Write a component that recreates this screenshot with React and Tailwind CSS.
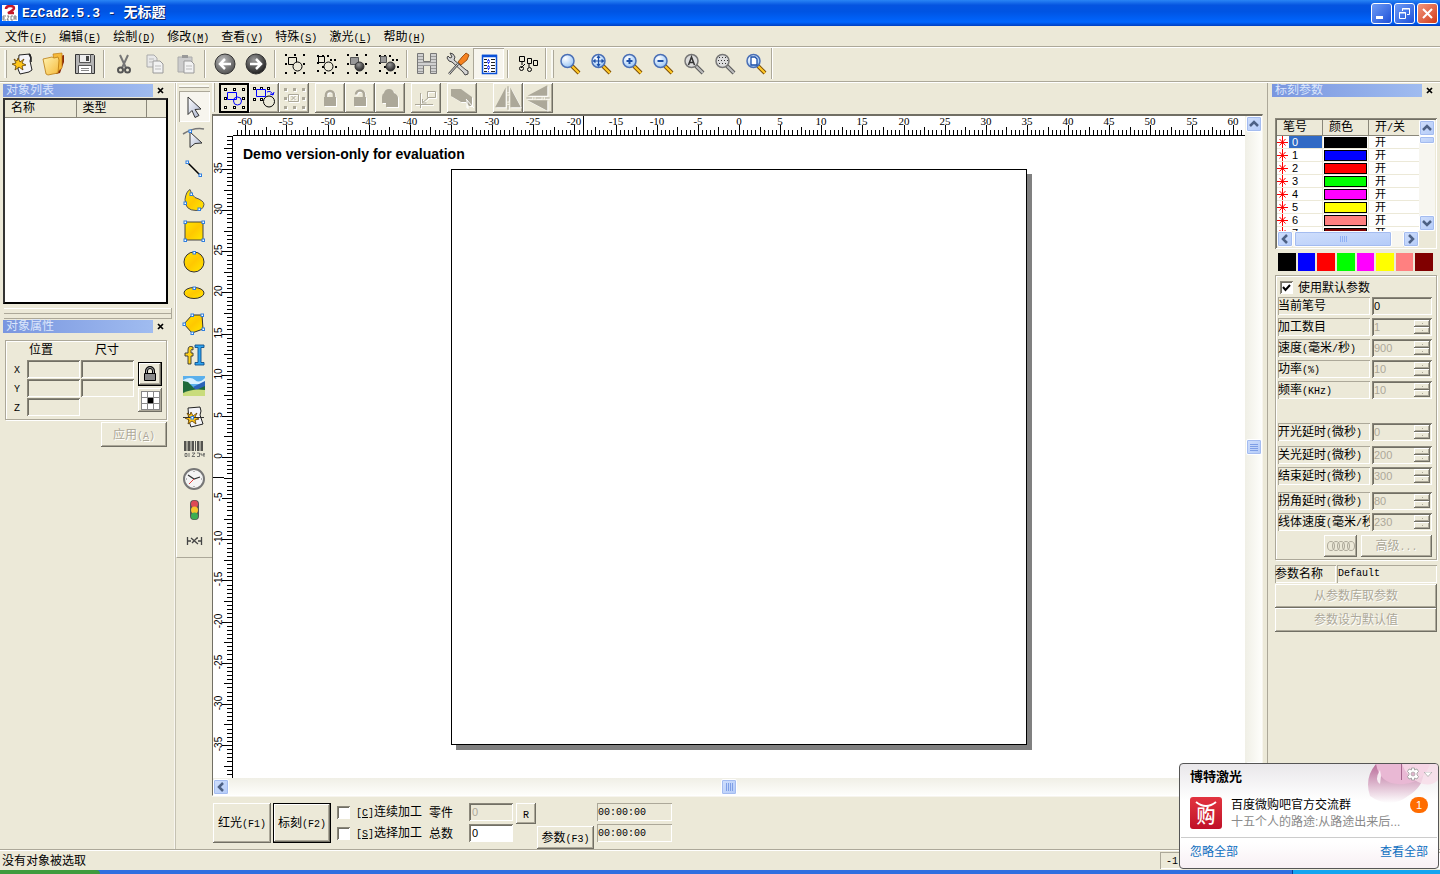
import React, { useState } from 'react'

const raised = 'bg-[#ece9d8] shadow-[inset_-1px_-1px_#716f64,inset_1px_1px_#fff,inset_-2px_-2px_#aca899]'
const sunken = 'shadow-[inset_1px_1px_#aca899,inset_-1px_-1px_#fff]'
const deep = 'shadow-[inset_1px_1px_#8a877a,inset_-1px_-1px_#fff,inset_2px_2px_#716f64]'

// Latin runs are set in a half-width face; "&" marks the mnemonic letter
const Txt = ({ children }) =>
  children.split(/([\x20-\x7e]+)/).map((part, i) => {
    if (i % 2 === 0) return part
    const at = part.indexOf('&')
    return (
      <span key={i} className="font-['Liberation_Mono',monospace] text-[10px] leading-none whitespace-pre">
        {at < 0 ? part : <>{part.slice(0, at)}<u>{part[at + 1]}</u>{part.slice(at + 2)}</>}
      </span>
    )
  })

const Svg = ({ children, size = 24, ...rest }) => (
  <svg width={size} height={size} viewBox="0 0 24 24" fill="none" className="shrink-0" aria-hidden="true" {...rest}>
    {children}
  </svg>
)

const Dots = ({ pts, color = '#000', s = 2 }) => pts.map(([x, y], i) => <rect key={i} x={x} y={y} width={s} height={s} fill={color} />)
const Nodes = ({ pts }) => pts.map(([x, y], i) => <rect key={i} x={x - 1} y={y - 1} width="2.5" height="2.5" fill="#fff" stroke="#2f7fe0" />)
const ring = [[2, 2], [11, 2], [20, 2], [2, 11], [20, 11], [2, 20], [11, 20], [20, 20]]

const Gradients = () => (
  <svg width="0" height="0" className="absolute" aria-hidden="true">
    <defs>
      <linearGradient id="gold" x1="0" y1="0" x2="1" y2="1"><stop offset="0" stopColor="#ffe600" /><stop offset=".5" stopColor="#ffc800" /><stop offset="1" stopColor="#ffe800" /></linearGradient>
      <linearGradient id="folder" x1="0" y1="0" x2="1" y2="1"><stop offset="0" stopColor="#fff3b0" /><stop offset="1" stopColor="#f5b93a" /></linearGradient>
      <radialGradient id="dark" cx=".4" cy=".3" r=".7"><stop offset="0" stopColor="#999" /><stop offset="1" stopColor="#222" /></radialGradient>
      <radialGradient id="grey" cx=".4" cy=".3" r=".7"><stop offset="0" stopColor="#bbb" /><stop offset="1" stopColor="#555" /></radialGradient>
      <radialGradient id="lens" cx=".35" cy=".3" r=".8"><stop offset="0" stopColor="#fff" /><stop offset="1" stopColor="#8fc0f5" /></radialGradient>
      <linearGradient id="arrow" x1="0" y1="0" x2="1" y2="1"><stop offset="0" stopColor="#fff" /><stop offset="1" stopColor="#a9b3cf" /></linearGradient>
    </defs>
  </svg>
)

const Star = ({ x = 0, y = 0 }) => (
  <path transform={`translate(${x} ${y})`} d="M7 7l2 4 4-3-2 4 4 2-4 1 1 4-4-3-4 3 1-4-4-2 4-1-2-4 3 2z" fill="#ffc61a" stroke="#5c3a00" strokeWidth=".8" />
)
const NewIcon = () => <Svg><path d="M8 3l11-1 1 3-1 4 2 9-3 2-9 2-2-5z" fill="#f4f4f8" stroke="#222" /><path d="M18 2l2 4 0 4" stroke="#222" strokeWidth="1.5" /><Star y={-1} /></Svg>
const OpenIcon = () => <Svg><path d="M15 5l7-2v7l-4 11-4 1z" fill="#8a2a08" /><path d="M11 2l9-1v15l-6 5z" fill="#f5b93a" stroke="#c07c10" strokeWidth=".7" /><path d="M1 7l9-2 2 1 4-1 1 3-1 13-10 2-2-1z" fill="url(#folder)" stroke="#b97b10" strokeWidth=".8" /></Svg>
const SaveIcon = () => <Svg><path d="M2.500 2.500h18l1 1v18h-19z" fill="#b4b4b4" stroke="#333" /><path d="M6.500 2.500h11v8h-11z" fill="#eee" stroke="#555" /><path d="M13 4h3v5h-3z" fill="#444" /><path d="M5.500 13.500h13v8h-13z" fill="#fff" stroke="#555" /><path d="M8 16.500h8M8 18.500h8" stroke="#888" /></Svg>
const CutIcon = () => <Svg><path d="M8 3l6 13M16 3l-6 13" stroke="#777" strokeWidth="2" /><circle cx="8.500" cy="18" r="2.500" stroke="#555" strokeWidth="2" /><circle cx="15.500" cy="18" r="2.500" stroke="#555" strokeWidth="2" /></Svg>
const CopyIcon = () => <Svg><path d="M4 3h7l3 3v9H4z" fill="#e8e8e8" stroke="#aaa" /><path d="M10 9h7l3 3v9H10z" fill="#f2f2f2" stroke="#999" /><path d="M6 7h5M6 10h4M12 14h6M12 17h6" stroke="#bbb" /></Svg>
const PasteIcon = () => <Svg><path d="M4 5h14v15H4z" fill="#ccc" stroke="#aaa" /><path d="M8 3h6v3H8z" fill="#999" /><path d="M10 9h7l3 3v9H10z" fill="#f2f2f2" stroke="#999" /><path d="M12 14h6M12 17h6" stroke="#bbb" /></Svg>
const NavIcon = ({ back }) => <Svg><circle cx="12" cy="12" r="10" fill={back ? 'url(#grey)' : 'url(#dark)'} stroke="#333" /><path d={back ? 'M18 12H7m5-5l-5 5 5 5' : 'M6 12h11m-5-5l5 5-5 5'} stroke="#fff" strokeWidth="2.500" /></Svg>
const GroupIcon = ({ solid, tight }) => (
  <Svg>
    <Dots pts={tight ? [[3, 3], [8, 3], [13, 3], [3, 10], [3, 18], [10, 20], [18, 20], [21, 14], [20, 7], [16, 7], [8, 14]] : ring} />
    <path d={tight ? 'M4.500 4.500h6v6h-6z' : 'M5.500 5.500h8v7h-8z'} fill={solid ? '#999' : 'none'} stroke={solid ? '#555' : '#000'} />
    <circle cx="14.500" cy="14.500" r="4.500" fill={solid ? 'url(#dark)' : '#ece9d8'} stroke={solid ? '#333' : '#000'} />
  </Svg>
)
const HatchIcon = () => <Svg><path d="M2.500 1.500h6v8h7v-8h6v20h-6v-8h-7v8h-6z" fill="#d0d0d0" stroke="#777" /><path d="M3 4.500h5M16 4.500h5M3 7.500h5M16 7.500h5M3 10.500h18M3 13.500h18M3 16.500h5M16 16.500h5M3 19.500h5M16 19.500h5" stroke="#999" /></Svg>
const ToolsIcon = () => <Svg><path d="M4 1l3 1 2 3-1 3 12 10 2 1v3l-3 1-2-3L6 10 3 9 1 6l1-2 2 2 2-1z" fill="#d4d4d4" stroke="#444" /><path d="M20 1l3 2-2 5-6 5-3-3 4-5z" fill="#f58220" stroke="#8a3c00" strokeWidth=".8" /><path d="M12 12L3 22" stroke="#444" strokeWidth="2.500" /><path d="M12 12L3 22" stroke="#ddd" /></Svg>
const ParamIcon = () => <Svg><path d="M5.500 3.500h14v18h-14z" fill="#fff" stroke="#0a50d8" strokeWidth="1.500" /><path d="M5 4h15" stroke="#0a50d8" strokeWidth="2.500" /><path d="M7 7.500h3M7 10.500h3M7 13.500h3M7 16.500h3M7 19.500h3M14 7.500h4M14 10.500h4M14 13.500h4M14 16.500h4M14 19.500h4" stroke="#222" /><path d="M11.500 7v13" stroke="#2a3cff" strokeDasharray="2 1" /><path d="M10.500 8.500h2v2h-2zM10.500 14.500h2v2h-2z" stroke="#2a3cff" strokeWidth=".8" /></Svg>
const ChainIcon = () => <Svg><path d="M3.500 4.500h5v5h-5zM11.500 6.500h4v5h-4zM17.500 8.500h4v5h-4zM6 10v3M13 12v3M9 12l-4 4" stroke="#000" /><circle cx="5.500" cy="16.500" r="2" stroke="#000" /><circle cx="13.500" cy="17.500" r="2" stroke="#000" /></Svg>
const ZoomIcon = ({ mark, grey }) => (
  <Svg>
    <path d="M14 14l7 7" stroke={grey ? '#555' : '#7a4a00'} strokeWidth="4" />
    <path d="M14 14l7 7" stroke={grey ? '#bbb' : '#ffc928'} strokeWidth="2.200" />
    <circle cx="9.500" cy="9" r="6.500" fill={grey ? '#ddd' : 'url(#lens)'} stroke={grey ? '#777' : '#4a6fb5'} strokeWidth="1.500" />
    {mark}
  </Svg>
)

const mainBars = [
  [['新建', <NewIcon />], ['打开', <OpenIcon />], ['保存', <SaveIcon />]],
  [['剪切', <CutIcon />], ['复制', <CopyIcon />], ['粘贴', <PasteIcon />]],
  [['撤消', <NavIcon back />], ['恢复', <NavIcon />]],
  [['组合', <GroupIcon />], ['分离组合', <GroupIcon tight />], ['群组', <GroupIcon solid />], ['分离群组', <GroupIcon solid tight />]],
  [['填充', <HatchIcon />], ['系统参数', <ToolsIcon />], ['对象列表', <ParamIcon />, true]],
  [['排序', <ChainIcon />]],
]

const blue = '#1c4fa8'
const zoomBar = [
  ['缩放', <ZoomIcon />],
  ['平移', <ZoomIcon mark={<path d="M9.500 4v10M4.500 9h10M8 6l1.500-2L11 6M8 12l1.500 2 1.500-2M6.500 7.500L4.500 9l2 1.500M12.500 7.500l2 1.500-2 1.500" stroke={blue} strokeWidth="1.200" />} />],
  ['放大', <ZoomIcon mark={<path d="M9.500 6v6M6.500 9h6" stroke={blue} strokeWidth="2" />} />],
  ['缩小', <ZoomIcon mark={<path d="M6.500 9h6" stroke={blue} strokeWidth="2" />} />],
  ['全部', <ZoomIcon grey mark={<path d="M6.500 13l3-8 3 8M7.500 10.500h4" stroke="#333" strokeWidth="1.500" />} />],
  ['选择', <ZoomIcon grey mark={<Dots s={1} color="#333" pts={[[6, 5], [9, 5], [12, 5], [5, 8], [8, 8], [11, 8], [14, 8], [6, 11], [9, 11], [12, 11]]} />} />],
  ['页面', <ZoomIcon mark={<path d="M7 5h4l2 2v6H7z" fill="#fff" stroke={blue} strokeWidth="1.300" />} />],
]

const dim = '#aca899'
const editBars = [
  [
    ['选取', <Svg><Dots pts={ring} s={3} /><Dots pts={[[3, 3], [12, 3], [21, 3], [3, 12], [21, 12], [3, 21], [12, 21], [21, 21]]} s={1} color="#fff" /><path d="M5.500 6.500h9v7h-9z" stroke="#00f" /><circle cx="15.500" cy="15" r="4" stroke="#00f" /></Svg>, 'on'],
    ['旋转', <Svg><Dots pts={[[1, 1], [8, 1], [15, 1], [1, 12], [8, 12]]} s={3} /><Dots pts={[[2, 2], [9, 2], [16, 2], [2, 13], [9, 13]]} s={1} color="#fff" /><path d="M4.500 3.500h9v7h-9z" stroke="#00f" /><circle cx="17" cy="15.500" r="5.500" stroke="#000" /><path d="M15 6q4-2 6 3m-3-1l3 1 1-3" stroke="#00f" /></Svg>, 'ready'],
    ['变换', <Svg><Dots pts={ring} s={3} color={dim} /><path d="M6.500 8.500h10v7h-10z" stroke={dim} /><path d="M9.500 10l4 4m0-4l-4 4" stroke={dim} /></Svg>],
  ],
  [
    ['锁定', <Svg><path d="M8 12V9a4 4 0 018 0v3" stroke={dim} strokeWidth="2.500" /><path d="M6 11h12v9H6z" fill={dim} /></Svg>],
    ['解锁', <Svg><path d="M8 8.500a4 4 0 018 0V12" stroke={dim} strokeWidth="2.500" /><path d="M6 11h12v9H6z" fill={dim} /></Svg>],
    ['全部解锁', <Svg><path d="M4 11q0-3 2-4 1-4 5-4 4 0 5 4 4 2 4 5v9H8v-4H4z" fill={dim} /></Svg>],
  ],
  [['原点', <Svg><path d="M1 18.500h18M6.500 7v15M8 17l6-5M8.500 13v4h4" stroke={dim} /><path d="M13.500 5.500h8v6h-8z" stroke={dim} /></Svg>]],
  [['焊接', <Svg><path d="M1 3h10l11 8v9h-3l-3-4H11L1 10z" fill={dim} /><path d="M16 13l7 8M17 14v8" stroke="#fff" /></Svg>]],
  [
    ['水平镜像', <Svg size={28}><path d="M10 3v17H1zM14 3v17h9z" fill={dim} /><path d="M12 2v20" stroke={dim} strokeDasharray="5 1 1 1" /></Svg>],
    ['垂直镜像', <Svg size={28}><path d="M20 10V1L3 10zM20 14v9L3 14z" fill={dim} /><path d="M2 12h20" stroke={dim} strokeDasharray="5 1 1 1" /></Svg>],
  ],
]
const editGaps = ['ml-0', 'ml-1.5', 'ml-1.5', 'ml-1.5', 'ml-4']

const drawTools = [
  ['选取', <Svg><path d="M6 2l13 12-6 .5 4 6-4 2-3-7-4 4z" fill="url(#arrow)" stroke="#333" /></Svg>, true],
  ['节点', <Svg><path d="M1 8Q12 1 22 3" stroke="#777" strokeWidth="1.500" /><path d="M8 6l12 11-7 .5-5 4z" fill="url(#arrow)" stroke="#333" /><Nodes pts={[[8, 5]]} /></Svg>],
  ['直线', <Svg><path d="M5 5l13 13" stroke="#000" strokeWidth="1.500" /><Nodes pts={[[5, 5], [18, 18]]} /></Svg>],
  ['曲线', <Svg><path d="M8 1.500q1 5 5 8 9 3 9 7-1 6-8 6-11 0-11-11 1-8 5-10z" fill="url(#gold)" stroke="#555" /><Nodes pts={[[9, 6], [3, 15], [17, 21]]} /></Svg>],
  ['矩形', <Svg><path d="M3 3h18v18H3z" fill="url(#gold)" stroke="#444" /><Nodes pts={[[3, 3], [21, 3], [3, 21], [21, 21]]} /></Svg>],
  ['圆', <Svg><circle cx="12" cy="12" r="10" fill="url(#gold)" stroke="#333" /><Nodes pts={[[12, 2.5]]} /></Svg>],
  ['椭圆', <Svg><ellipse cx="12" cy="12" rx="10" ry="5.500" fill="url(#gold)" stroke="#333" /><Nodes pts={[[12, 7]]} /></Svg>],
  ['多边形', <Svg><path d="M2 12l8-9h10l1 14-11 4z" fill="url(#gold)" stroke="#333" /><Nodes pts={[[2, 12], [10, 3], [20, 3], [21, 17], [10, 21]]} /></Svg>],
  ['文字', <Svg><path d="M11 4q-5-2-5 3v3H3v3h3v8h3v-8h2v-3H9V7q0-1 2 0z" fill="#ffd21a" stroke="#333" strokeWidth=".9" /><path d="M13 2h9v2.500h-3v15h3V22h-9v-2.500h3v-15h-3z" fill="#2fa4f0" stroke="#0d4f8a" strokeWidth=".9" /></Svg>],
  ['位图', <Svg><path d="M1 2h22v20H1z" fill="#5bb0ec" /><path d="M1 6q8-4 12 0t10-2v6H1z" fill="#d8f0ff" /><path d="M1 7l5 1 6 6 11-4v12H1z" fill="#1f6a3a" /><path d="M11 13l12-6v5l-9 4z" fill="#2a62b8" /><path d="M1 19q10-5 22-3v6H1z" fill="#c9dc7c" /></Svg>],
  ['矢量文件', <Svg><path d="M6 3l12-1 1 4-1 4 3 9-4 1-8 2-2-6z" fill="#f4f4f8" stroke="#222" /><Star x={2} y={0} /><path d="M1 12.500h21" stroke="#333" /><Nodes pts={[[10, 12.5]]} /></Svg>],
  ['条码', <Svg><path d="M3 5v10M7 5v10M11 5v10M16 5v10M20 5v10" stroke="#222" strokeWidth="1.500" /><path d="M5 5v10M9 5v10M13.500 5v10M18 5v10" stroke="#444" strokeWidth=".9" /><path d="M3 17.500h2v3H3zM7 17v4M10 17h3l-3 3.500h3M15 17h2.500v3.500H15M19 17v2h3v-2v4" stroke="#555" strokeWidth=".8" /></Svg>],
  ['延时器', <Svg><circle cx="12" cy="12" r="10" fill="#f4f4f4" stroke="#777" strokeWidth="2" /><path d="M6 8l6 4 6-2" stroke="#333" strokeWidth="1.300" /><path d="M12 12l-5 5" stroke="#e04040" /><path d="M12 4v1M12 19v1M4 12h1M19 12h1" stroke="#777" /></Svg>],
  ['输入口', <Svg><rect x="8" y="2" width="9" height="20" rx="4" fill="#555" /><circle cx="12.500" cy="6" r="3.500" fill="#dd4a55" /><circle cx="12.500" cy="12" r="3.500" fill="#f7c52c" /><circle cx="12.500" cy="18" r="3.500" fill="#3dae52" /></Svg>],
  ['输出口', <Svg><path d="M5.500 8v8M5 12h4M19.500 8v8M19 12h-3M9 9l7 6M10 14l5-5h1" stroke="#444" strokeWidth="1.300" /></Svg>],
]

const IconButton = ({ label, children, on }) => (
  <button aria-label={label} title={label} className={`flex h-[31px] w-[31px] shrink-0 items-center justify-center ${on ? 'bg-[#f7f5ee] ' + sunken : ''}`}>
    {children}
  </button>
)

const Grip = () => <div className="h-7 w-[3px] shrink-0 border-r border-[#aca899] bg-white/70" />
const Sep = () => <div className="mx-[3px] h-7 w-[2px] shrink-0 border-r border-white bg-[#aca899]" />

const TitleBar = () => (
  <header className="flex h-[26px] shrink-0 items-center gap-1 bg-[linear-gradient(#2a85f5,#0554e0_20%,#0054e3_45%,#0066ff_85%,#003fc0)] pr-0.5 pl-0.5">
    <svg width="16" height="16" viewBox="0 0 16 16" aria-hidden="true">
      <path fill="#fff" d="M0 0h16v16H0z" />
      <path d="M4 4q0-3 4-3 4 0 4 2 0 2-6 5h6" fill="none" stroke="#c4182a" strokeWidth="2.500" />
      <path d="M1 11h3M1 13h2M1 15h3M1 11v4M5 11h2l-2 4h2M11 11H9v4h2M12 15v-4h2v4M12 13h2" fill="none" stroke="#666" strokeWidth=".8" />
    </svg>
    <h1 className="flex-1 font-['Liberation_Mono','Noto_Sans_CJK_SC',monospace] text-[13px] font-bold text-white [text-shadow:1px_1px_#0a246a]">
      EzCad2.5.3 - <span className="text-[14px]">无标题</span>
    </h1>
    <div className="flex gap-0.5">
      <button aria-label="最小化" className="flex size-[21px] items-center justify-center rounded-[3px] border border-white bg-linear-to-br from-[#6f9bf5] to-[#1f4fd8]"><svg width="13" height="13"><path d="M1 9h7v3H1z" fill="#fff" /></svg></button>
      <button aria-label="还原" className="flex size-[21px] items-center justify-center rounded-[3px] border border-white bg-linear-to-br from-[#6f9bf5] to-[#1f4fd8]"><svg width="13" height="13" fill="none" stroke="#fff"><path d="M4.500 4V1.500h7v6H9M4 2h8M1.500 5.500h6v6h-6zM1 6h7" /></svg></button>
      <button aria-label="关闭" className="flex size-[21px] items-center justify-center rounded-[3px] border border-white bg-linear-to-br from-[#f0957c] to-[#d0360c]"><svg width="13" height="13" stroke="#fff" strokeWidth="2"><path d="M2 2l9 9M11 2l-9 9" /></svg></button>
    </div>
  </header>
)

const MenuBar = () => (
  <nav className="flex h-[21px] shrink-0 items-center gap-3 border-b border-[#aca899] pt-0.5 pl-[5px]">
    {['文件(&F)', '编辑(&E)', '绘制(&D)', '修改(&M)', '查看(&V)', '特殊(&S)', '激光(&L)', '帮助(&H)'].map((m) => (
      <button key={m} className="whitespace-nowrap"><Txt>{m}</Txt></button>
    ))}
  </nav>
)

const MainToolbar = () => (
  <div className="flex h-[35px] shrink-0 items-center border-t border-b border-t-white border-b-[#aca899] pb-0.5 pl-1">
    <Grip />
    {mainBars.map((bar, i) => (
      <React.Fragment key={i}>
        {i > 0 && <Sep />}
        {bar.map(([label, icon, on]) => <IconButton key={label} label={label} on={on}>{icon}</IconButton>)}
      </React.Fragment>
    ))}
    <div className="ml-0.5 h-full w-[2px] border-r border-white bg-[#aca899]" />
    <div className="ml-1 flex"><Grip /></div>
    {zoomBar.map(([label, icon]) => <IconButton key={label} label={label}>{icon}</IconButton>)}
    <div className="h-full w-[2px] border-r border-white bg-[#aca899]" />
  </div>
)

const DockTitle = ({ children }) => (
  <div className="flex h-[13px] items-center">
    <h2 className="flex h-[13px] w-[150px] items-center bg-linear-to-r from-[#7a96df] to-[#a0bcf0] pl-[3px] leading-[13px] text-[#dbe6fb]">{children}</h2>
    <button aria-label={`关闭${children}`} className="ml-0.5 flex size-[11px] items-center justify-center">
      <svg width="7" height="7" stroke="#000" strokeWidth="1.700"><path d="M1 1l5 5M6 1L1 6" /></svg>
    </button>
  </div>
)

const Field = ({ label }) => <input aria-label={label} disabled className={`h-[18px] w-[53px] px-1 ${deep}`} />

const LeftDock = () => (
  <aside className="flex w-[175px] shrink-0 flex-col border-r border-[#f7f5ee] pt-px">
    <div className="pl-[3px]"><DockTitle>对象列表</DockTitle></div>
    <div className="mt-px ml-[3px] h-[206px] w-[165px] border-2 border-t-[#333] border-r-black border-b-black border-l-[#333] bg-white">
      <table className="w-full table-fixed border-collapse">
        <thead>
          <tr className="h-[17px] bg-[#ece9d8] text-left">
            <th className="w-[71px] border-r border-b border-[#8a877a] py-0 pl-1.5 leading-4 font-normal">名称</th>
            <th className="w-[70px] border-r border-b border-[#8a877a] py-0 pl-1.5 leading-4 font-normal">类型</th>
            <th className="border-b border-[#8a877a]" />
          </tr>
        </thead>
        <tbody />
      </table>
    </div>
    <div className="mt-1 mr-0.5 ml-1 h-[11px] border-r border-b border-[#aca899]"><div className="h-[6px] border-t border-b border-t-white border-b-[#aca899]" /></div>
    <div className="mt-[1px] pl-[3px]"><DockTitle>对象属性</DockTitle></div>
    <section className="mt-[7px] ml-[5px] flex h-[80px] w-[162px] border border-[#aca899] shadow-[inset_1px_1px_#fff,1px_1px_#fff]">
      <div className="grid h-[76px] grid-cols-[13px_53px_53px] grid-rows-[18px_18px_18px_18px] gap-x-px gap-y-px pl-[7px]">
        <span />
        <span className="pl-0.5 leading-[19px]">位置</span>
        <span className="pl-3.5 leading-[19px]">尺寸</span>
        {['X', 'Y', 'Z'].map((a) => (
          <React.Fragment key={a}>
            <span className="pl-px leading-[18px]"><Txt>{a}</Txt></span>
            <Field label={`位置${a}`} />
            {a === 'Z' ? <span /> : <Field label={`尺寸${a}`} />}
          </React.Fragment>
        ))}
      </div>
      <div className="mt-[21px] ml-1 flex flex-col gap-0.5">
        <button aria-label="锁定比例" className={`flex size-6 items-center justify-center border border-black ${raised}`}>
          <svg width="16" height="18" fill="none"><path d="M4.500 9V6a3.500 3.500 0 017 0v3" stroke="#000" strokeWidth="3" /><path d="M4.500 9V6a3.500 3.500 0 017 0v3" stroke="#aaa" /><path d="M2.500 8.500h11v7h-11z" fill="#888" stroke="#000" /></svg>
        </button>
        <button aria-label="基准点" className={`flex size-6 items-center justify-center ${raised}`}>
          <svg width="19" height="19"><path d="M0 0h19v19H0z" fill="#888" />{[1, 7, 13].map((y) => [1, 7, 13].map((x) => <rect key={x + '-' + y} x={x} y={y} width="5" height="5" fill={x === 7 && y === 7 ? '#000' : '#fff'} />))}</svg>
        </button>
      </div>
    </section>
    <button disabled className={`mt-0.5 mr-[7px] h-[25px] w-[66px] self-end text-[#aca899] [text-shadow:1px_1px_#fff] ${raised}`}><Txt>应用(&A)</Txt></button>
  </aside>
)

const DrawTools = () => (
  <div className="w-[37px] shrink-0 border-l border-[#c5c2b2]">
    <div className="flex flex-col items-center border-b border-l border-[#aca899] border-l-white pr-px pb-px">
      <div className="mt-0.5 mb-[3px] h-[3px] w-[30px] border-b border-[#aca899] bg-white/70" />
      {drawTools.map(([label, icon, on]) => <IconButton key={label} label={label} on={on}>{icon}</IconButton>)}
    </div>
  </div>
)

const editState = {
  on: 'border-2 border-black bg-[#ece9d8]',
  ready: raised,
  off: `${raised} [&>svg]:drop-shadow-[1px_1px_0_#fff]`,
}

const EditToolbar = () => (
  <div className="flex h-[31px] items-start">
    <div className="mr-1 h-[29px] w-[3px] border-r border-[#aca899] bg-white/70" />
    {editBars.map((bar, i) => (
      <div key={i} className={`flex ${editGaps[i]}`}>
        {bar.map(([label, icon, state = 'off']) => (
          <button key={label} aria-label={label} title={label} disabled={state === 'off'} className={`flex size-[30px] items-center justify-center ${editState[state]}`}>{icon}</button>
        ))}
      </div>
    ))}
  </div>
)

// 576 px of paper stand for 70 mm
const unit = 576 / 70

const ticks = (from, to) => {
  const list = []
  for (let n = from * 2; n <= to * 2; n++) {
    list.push({ v: n / 2, pos: Math.round((n / 2) * unit), len: n % 10 === 0 ? 10 : n % 5 === 0 ? 8 : 5, major: n % 10 === 0 })
  }
  return list
}

const TopRuler = () => (
  <svg className="h-5 w-full min-w-0 border-b border-black" shapeRendering="crispEdges">
    <svg x="50%" overflow="visible">
      {ticks(-61, 61).map((t) => (
        <g key={t.v}>
          <rect x={t.pos} y={19 - t.len} width="1" height={t.len} />
          {t.major && <text x={t.pos} y="9" textAnchor="middle" className="font-['Liberation_Serif',serif] text-[11px]">{t.v}</text>}
        </g>
      ))}
      <rect x="-156" width="1" height="19" />
    </svg>
  </svg>
)

const LeftRuler = () => (
  <svg className="h-full w-5 border-r border-black" shapeRendering="crispEdges">
    <svg y="50%" overflow="visible">
      {ticks(-39, 39).map((t) => (
        <g key={t.v}>
          <rect x={19 - t.len} y={t.pos} width={t.len} height="1" />
          {t.major && <text transform={`translate(9 ${t.pos - 1}) rotate(-90)`} textAnchor="middle" className="font-['Liberation_Sans',sans-serif] text-[10px]">{-t.v || 0}</text>}
        </g>
      ))}
      <rect y="20" width="11" height="1" />
    </svg>
  </svg>
)

const chevrons = { up: 'M4 10l4-4 4 4', down: 'M4 6l4 4 4-4', left: 'M10 4L6 8l4 4', right: 'M6 4l4 4-4 4' }
const thumb = 'rounded-[2px] border border-white bg-linear-to-br from-[#d0dffc] to-[#b4cbf8] shadow-[0_0_0_1px_#a4bcf0_inset]'

const ScrollButton = ({ dir }) => (
  <button aria-label={dir} className={`flex size-4 shrink-0 items-center justify-center ${thumb}`}>
    <svg width="16" height="16" viewBox="0 0 16 16" fill="none" stroke="#4d6185" strokeWidth="2.500" className="shrink-0"><path d={chevrons[dir]} /></svg>
  </button>
)

const Drawing = () => (
  <div className="grid min-h-0 flex-1 grid-cols-[20px_minmax(0,1fr)_17px] grid-rows-[20px_minmax(0,1fr)_17px] border-t-2 border-r border-b border-l border-t-[#716f64] border-r-[#f7f5ee] border-b-white border-l-[#716f64] bg-white">
    <div />
    <TopRuler />
    <div className="row-span-2 flex flex-col items-center justify-between bg-linear-to-r from-[#f0efe6] to-[#fefefb]">
      <ScrollButton dir="up" />
      <div className={`flex size-4 flex-col items-center justify-center gap-px ${thumb}`}>
        {[0, 1, 2, 3].map((i) => <i key={i} className="h-px w-2 bg-[#7f9fe6]" />)}
      </div>
      <ScrollButton dir="down" />
    </div>
    <LeftRuler />
    <main className="relative flex items-center justify-center overflow-hidden">
      <p className="absolute top-2.5 left-2.5 font-['Liberation_Sans',sans-serif] text-[14px] leading-4 font-bold">Demo version-only for evaluation</p>
      <div className="size-[576px] border border-black bg-white shadow-[5px_5px_#808080]" />
    </main>
    <div className="col-span-2 flex items-center justify-between bg-linear-to-b from-[#f0efe6] to-[#fefefb]">
      <ScrollButton dir="left" />
      <div className={`flex size-4 items-center justify-center gap-px ${thumb}`}>
        {[0, 1, 2, 3].map((i) => <i key={i} className="h-2 w-px bg-[#7f9fe6]" />)}
      </div>
      <ScrollButton dir="right" />
    </div>
    <div className="bg-[#ece9d8]" />
  </div>
)

const MarkPanel = () => (
  <div className="flex h-[53px] shrink-0 items-start border-t border-[#f7f5ee] pt-1.5 pl-px whitespace-nowrap">
    <button className={`h-10 w-[58px] ${raised}`}><Txt>红光(F1)</Txt></button>
    <button className={`ml-0.5 h-10 w-[58px] border border-black ${raised}`}><Txt>标刻(F2)</Txt></button>
    <div className="ml-1.5 flex w-[92px] flex-col gap-[3px]">
      {['[&C]连续加工', '[&S]选择加工'].map((t) => (
        <label key={t} className="flex h-[18px] items-center gap-1.5">
          <input type="checkbox" className={`size-[13px] appearance-none bg-white ${deep}`} />
          <span><Txt>{t}</Txt></span>
        </label>
      ))}
    </div>
    <div className="flex flex-col gap-[3px]">
      <label className="flex h-[18px] items-center"><span className="w-10 pt-0.5">零件</span><input disabled defaultValue="0" className={`h-[18px] w-[44px] px-[3px] text-[11px] text-[#aca899] ${deep}`} /></label>
      <label className="flex h-[18px] items-center"><span className="w-10 pt-0.5">总数</span><input defaultValue="0" className={`h-[18px] w-[44px] bg-white px-[3px] text-[11px] ${deep}`} /></label>
    </div>
    <button className={`ml-[3px] h-[21px] w-5 ${raised}`}><Txt>R</Txt></button>
    <button className={`mt-[23px] ml-px h-[23px] w-[57px] ${raised}`}><Txt>参数(F3)</Txt></button>
    <div className="ml-[3px] flex flex-col gap-[3px]">
      <output className={`h-[18px] w-[75px] pl-px leading-[17px] ${sunken}`}><Txt>00:00:00</Txt></output>
      <output className={`h-[18px] w-[75px] pl-px leading-[17px] ${sunken}`}><Txt>00:00:00</Txt></output>
    </div>
  </div>
)

const pens = ['bg-black', 'bg-[#0000ff]', 'bg-[#ff0000]', 'bg-[#00ff00]', 'bg-[#ff00ff]', 'bg-[#ffff00]', 'bg-[#ff8080]', 'bg-[#800000]']

const PenList = () => (
  <div className={`mt-[21px] flex h-[131px] flex-col p-0.5 ${deep}`}>
    <div className="flex min-h-0 flex-1">
      <div className="min-w-0 flex-1 overflow-hidden bg-white">
        <table className="w-full table-fixed border-separate border-spacing-0">
          <thead>
            <tr className="h-4 bg-[#ece9d8] text-left align-top leading-[14px]">
              <th className="w-[46px] border-r border-b border-[#8a877a] p-0 pl-1.5 font-normal">笔号</th>
              <th className="w-[46px] border-r border-b border-[#8a877a] p-0 pl-1.5 font-normal">颜色</th>
              <th className="border-b border-[#8a877a] p-0 pl-1.5 font-normal"><Txt>开/关</Txt></th>
            </tr>
          </thead>
          <tbody>
            {pens.map((c, i) => (
              <tr key={c} className="h-[13px]">
                <td className="border-r border-b border-[#ece9d8] p-0">
                  <div className="flex h-3 items-center">
                    <svg width="12" height="12" stroke="#f00" className="shrink-0"><path d="M5.500 0v12M0 6.500h11M2.500 3l6 6.500M8.500 3l-6 6.500" /></svg>
                    <span className={`h-3 flex-1 pl-[3px] text-[11px] leading-3 ${i === 0 ? 'bg-[#316ac5] text-white' : ''}`}>{i}</span>
                  </div>
                </td>
                <td className="border-r border-b border-[#ece9d8] p-0"><div className={`mx-px h-[11px] border border-black ${c}`} /></td>
                <td className="border-b border-[#ece9d8] p-0"><div className="h-3 pl-1.5 text-[11px] leading-3">开</div></td>
              </tr>
            ))}
          </tbody>
        </table>
      </div>
      <div className="flex w-4 shrink-0 flex-col bg-[#f7f6f0]">
        <ScrollButton dir="up" />
        <div className={`h-2 ${thumb}`} />
        <div className="flex-1" />
        <ScrollButton dir="down" />
      </div>
    </div>
    <div className="flex h-4 shrink-0 pr-4">
      <ScrollButton dir="left" />
      <div className="flex flex-1 bg-[#f7f6f0] pl-px">
        <div className={`flex w-[98px] items-center justify-center gap-px ${thumb}`}>
          {[0, 1, 2, 3].map((i) => <i key={i} className="h-1.5 w-px bg-[#8fb0f5]" />)}
        </div>
      </div>
      <ScrollButton dir="right" />
    </div>
  </div>
)

const Param = ({ id, label, value, top = 'mt-[3px]', plain }) => (
  <div className={`flex h-[18px] justify-between ${top}`}>
    <label htmlFor={id} className={`w-[92px] overflow-hidden leading-[18px] whitespace-nowrap ${sunken}`}><Txt>{label}</Txt></label>
    <div className={`flex w-[60px] p-0.5 ${deep}`}>
      <input id={id} disabled={!plain} readOnly={plain} defaultValue={value} className={`w-0 min-w-0 flex-1 text-[11px] leading-[14px] ${plain ? '' : 'text-[#aca899]'}`} />
      {!plain && (
        <div className="flex w-4 flex-col">
          <button disabled aria-label={`${label} +`} className={`flex h-[7px] items-center justify-center ${raised}`}><i className="size-px bg-[#aca899]" /></button>
          <button disabled aria-label={`${label} -`} className={`flex h-[7px] items-center justify-center ${raised}`}><i className="size-px bg-[#aca899]" /></button>
        </div>
      )}
    </div>
  </div>
)

const RightDock = () => {
  const [useDefault, setUseDefault] = useState(true)
  const off = `text-[#aca899] [text-shadow:1px_1px_#fff] ${raised}`
  return (
    <aside className="ml-1 w-[173px] shrink-0 border-l border-[#aca899] pt-px pr-[3px] pl-1">
      <DockTitle>标刻参数</DockTitle>
      <div className="pl-[3px]">
        <PenList />
        <div className="mt-1 flex h-[18px] gap-0.5 pr-1 pl-[3px]">
          {pens.map((c, i) => <button key={c} aria-label={`笔 ${i}`} className={`flex-1 ${c}`} />)}
        </div>
        <section className="mt-1 border border-[#aca899] pt-[5px] pr-1 pb-0.5 pl-0.5 shadow-[inset_1px_1px_#fff,1px_1px_#fff]">
          <label className="flex h-[13px] items-center gap-[5px] pl-0.5">
            <span className={`relative flex size-[13px] bg-white ${deep}`}>
              <input type="checkbox" checked={useDefault} onChange={(e) => setUseDefault(e.target.checked)} className="size-[13px] appearance-none" />
              {useDefault && <svg width="13" height="13" fill="none" stroke="#000" strokeWidth="2" className="pointer-events-none absolute"><path d="M3 6l2.500 3L10 4" /></svg>}
            </span>
            使用默认参数
          </label>
          <Param id="pen" label="当前笔号" value="0" plain />
          <Param id="count" label="加工数目" value="1" />
          <Param id="speed" label="速度(毫米/秒)" value="900" />
          <Param id="power" label="功率(%)" value="10" />
          <Param id="freq" label="频率(KHz)" value="10" />
          <Param id="on-delay" label="开光延时(微秒)" value="0" top="mt-6" />
          <Param id="off-delay" label="关光延时(微秒)" value="200" top="mt-[5px]" />
          <Param id="end-delay" label="结束延时(微秒)" value="300" />
          <Param id="corner-delay" label="拐角延时(微秒)" value="80" top="mt-[7px]" />
          <Param id="line-speed" label="线体速度(毫米/秒)" value="230" />
          <div className="mt-1 flex justify-end gap-1">
            <button disabled aria-label="摆动" className={`flex h-[22px] w-[33px] items-center justify-center ${raised}`}>
              <svg width="28" height="12" fill="none" stroke="#aca899">{[4, 9, 14, 19, 24].map((x) => <ellipse key={x} cx={x} cy="6" rx="3.500" ry="4.500" />)}</svg>
            </button>
            <button disabled className={`h-[22px] w-[71px] ${off}`}><Txt>高级...</Txt></button>
          </div>
        </section>
        <div className="mt-[5px] flex h-[18px] gap-px leading-[18px]">
          <label htmlFor="pname" className={`w-[61px] ${sunken}`}>参数名称</label>
          <input id="pname" readOnly defaultValue="Default" className={`min-w-0 flex-1 pl-px font-['Liberation_Mono',monospace] text-[10px] ${sunken}`} />
        </div>
        <button disabled className={`mt-px block h-6 w-full ${off}`}>从参数库取参数</button>
        <button disabled className={`block h-6 w-full ${off}`}>参数设为默认值</button>
      </div>
    </aside>
  )
}

const Popup = () => (
  <section className="absolute right-px bottom-[5px] h-[106px] w-[260px] overflow-hidden rounded-[4px] border border-[#555] bg-[linear-gradient(#e9e7ea,#fff_35%,#fff_75%,#f8f0f4)]">
    <svg width="86" height="42" className="absolute top-0 right-0" aria-hidden="true">
      <defs><linearGradient id="petal" x1="0" y1="0" x2="0" y2="1"><stop offset="0" stopColor="#b86a98" /><stop offset="1" stopColor="#fff" /></linearGradient></defs>
      <path d="M24 0Q12 14 18 32q20 14 38 0Q76 20 70 0z" fill="url(#petal)" />
      <path d="M24 0q4 22 28 20Q72 18 78 0z" fill="#e9b8d4" />
      <path d="M28 6q-6 10 0 14l1-8z" fill="#fff" opacity=".8" />
      <path d="M50 0h36v16q-8 8-20 2-12-6-16-18z" fill="#f7dce8" opacity=".8" />
      <path d="M49.500 0v16" stroke="#a5668c" />
    </svg>
    <button aria-label="设置" className="absolute top-[3px] right-1.5 flex items-center gap-1">
      <svg width="14" height="14" viewBox="0 0 14 14" aria-hidden="true"><path d="M5.500 1h3v2l2.500-1 1.500 2.500L11 6v2l1.500 1.500L11 12l-2.500-1v2h-3v-2L3 12 1.500 9.500 3 8V6L1.500 4.500 3 2l2.500 1z" fill="#fff" stroke="#999" strokeWidth=".8" /><circle cx="7" cy="7" r="2" fill="#e0b4cc" stroke="#999" strokeWidth=".6" /></svg>
      <svg width="8" height="5" aria-hidden="true"><path d="M0 0h8L4 4.500z" fill="#fff" stroke="#999" strokeWidth=".6" /></svg>
    </button>
    <h2 className="pt-[5px] pl-2.5 text-[13px] leading-4 font-bold">博特激光</h2>
    <div className="mt-3 flex items-start pl-2.5">
      <div className="relative flex size-8 items-end justify-center rounded-[3px] bg-linear-to-b from-[#e2333f] to-[#c00f28] text-[19px] leading-6 font-medium text-white">
        购
        <svg width="24" height="8" fill="none" stroke="#fff" strokeWidth="2" className="absolute top-1 left-1"><path d="M2 1q10 8 20 0" /></svg>
      </div>
      <div className="ml-[9px] flex-1">
        <p className="leading-4">百度微购吧官方交流群</p>
        <p className="mt-px leading-4 text-[#8a8a8a]">十五个人的路途:从路途出来后...</p>
      </div>
      <span className="mr-2.5 h-4 w-[18px] rounded-full bg-[#ff6c00] text-center text-[11px] leading-4 text-white">1</span>
    </div>
    <div className="mx-px mt-[7px] flex justify-between border-t border-[#ccc] px-[9px] pt-1.5 text-[#0f6fc0]">
      <a href="#ignore">忽略全部</a>
      <a href="#all">查看全部</a>
    </div>
  </section>
)

export default function App() {
  return (
    <div className="relative flex h-screen flex-col overflow-hidden bg-[#ece9d8] font-['Liberation_Sans','Noto_Sans_CJK_SC',sans-serif] text-[12px] leading-4 text-black">
      <Gradients />
      <TitleBar />
      <MenuBar />
      <MainToolbar />
      <div className="flex min-h-0 flex-1 border-t border-white">
        <LeftDock />
        <DrawTools />
        <div className="flex min-w-0 flex-1 flex-col">
          <EditToolbar />
          <Drawing />
          <MarkPanel />
        </div>
        <RightDock />
      </div>
      <footer className="flex h-[21px] shrink-0 items-center justify-between border-t border-[#aca899] pl-0.5 shadow-[inset_0_1px_#fff]">
        <span className="pt-0.5">没有对象被选取</span>
        <span className={`h-[17px] w-[280px] pl-1.5 ${sunken}`}><Txt>-1</Txt></span>
      </footer>
      <div className="flex h-1 shrink-0 bg-[#2f6fe0]">
        <div className="w-[100px] rounded-tr bg-[#3f9b3f]" />
        <div className="flex-1" />
        <div className="w-[148px] border-l border-[#0a3c96] bg-[#14a5f0]" />
      </div>
      <Popup />
    </div>
  )
}
